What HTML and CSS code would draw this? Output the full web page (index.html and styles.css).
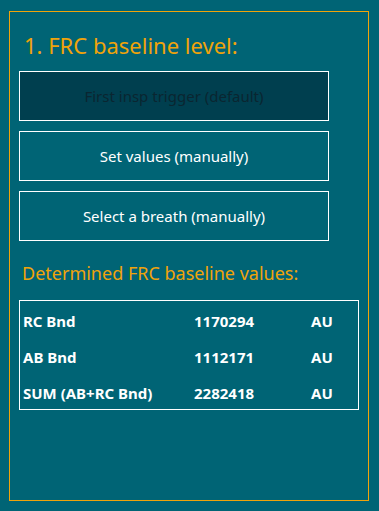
FILE: index.html
```html
<!DOCTYPE html>
<html>
<head>
    <title>FRC baseline</title>
    <link rel="stylesheet" href="styles.css">
</head>
<body>
    <div class="panel">
        <h1 class="title">1. FRC baseline level:</h1>
        <div class="choices">
            <button class="choice active">First insp trigger (default)</button>
            <button class="choice">Set values (manually)</button>
            <button class="choice">Select a breath (manually)</button>
        </div>
        <h2 class="subtitle">Determined FRC baseline values:</h2>
        <div class="values">
            <div class="row"><span class="name">RC Bnd</span><span class="num">1170294</span><span class="unit">AU</span></div>
            <div class="row"><span class="name">AB Bnd</span><span class="num">1112171</span><span class="unit">AU</span></div>
            <div class="row"><span class="name">SUM (AB+RC Bnd)</span><span class="num">2282418</span><span class="unit">AU</span></div>
        </div>
    </div>
</body>
</html>
```
FILE: styles.css
```css
body {
    background-color: #006475;
    margin: 0;
    padding: 11px 0 0 9px;
    font-family: "Noto Sans", "DejaVu Sans", sans-serif;
}
.panel {
    box-sizing: border-box;
    width: 360px;
    height: 490px;
    border: 1px solid #f0a30a;
    padding: 0 0 0 9px;
}
.title {
    color: #f0a30a;
    font-size: 22px;
    font-weight: normal;
    margin: 17px 0 0 5px;
    line-height: 32px;
}
.choices {
    display: flex;
    flex-direction: column;
    gap: 10px;
    margin-top: 10px;
}
.choice {
    width: 310px;
    height: 50px;
    border: 1px solid #ffffff;
    background-color: transparent;
    color: #ffffff;
    font-family: inherit;
    font-size: 15px;
    padding: 0;
}
.choice.active {
    background-color: #003f4f;
    color: #0a2631;
}
.subtitle {
    color: #f0a30a;
    font-size: 18px;
    font-weight: normal;
    margin: 19px 0 0 3px;
    line-height: 26px;
}
.values {
    box-sizing: border-box;
    width: 340px;
    height: 110px;
    border: 1px solid #ffffff;
    margin-top: 14px;
    padding-top: 8px;
}
.row {
    display: flex;
    color: #ffffff;
    font-size: 15px;
    font-weight: bold;
    height: 36px;
    line-height: 24px;
    padding-left: 3px;
}
.name {
    width: 171px;
}
.num {
    width: 117px;
}
```
